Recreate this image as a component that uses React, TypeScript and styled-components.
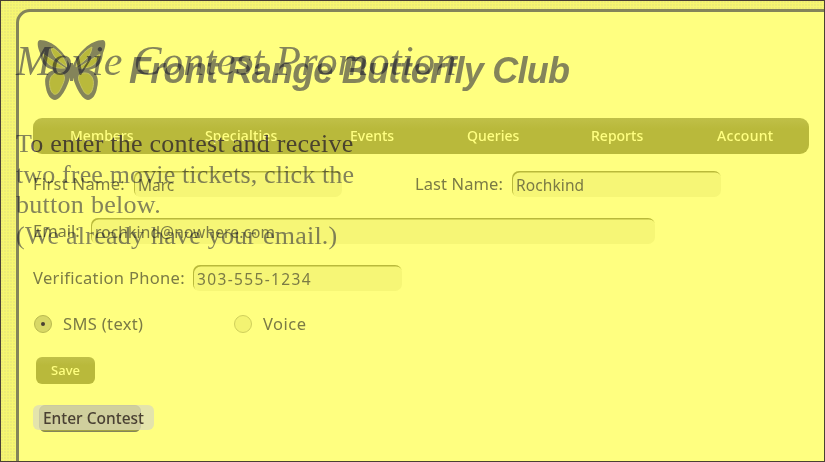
import React from 'react';
import styled, { createGlobalStyle } from 'styled-components';

const ui = '"Noto Sans", "Open Sans", sans-serif';
const serif = '"Liberation Serif", serif';

const GlobalStyle = createGlobalStyle`
  *, *::before, *::after { box-sizing: border-box; }
  body { margin: 0; background: #ffff80; overflow: hidden; }
`;

const Screen = styled.div`
  position: relative;
  width: 825px;
  height: 462px;
  overflow: hidden;
  border: 1px solid #4a4033;
  background-color: #f6f670;
  background-image: radial-gradient(circle at 1px 1px, #e8e678 0.6px, transparent 0.9px);
  background-size: 3px 3px;
  padding: 8px 0 0 15px;
`;

const Panel = styled.main`
  width: 830px;
  height: 480px;
  border: 3px solid #84845a;
  border-radius: 14px;
  background: #ffff80;
  padding: 27px 0 0 14px;
`;

const Banner = styled.header`
  display: flex;
  height: 79px;
  padding-left: 4px;
`;

const ClubName = styled.h1`
  margin: 11px 0 0 23px;
  font: italic bold 36px/42px "Liberation Sans", sans-serif;
  letter-spacing: -0.76px;
  color: #84845a;
  white-space: nowrap;
`;

const Nav = styled.nav`
  display: flex;
  gap: 72px;
  width: 776px;
  height: 36px;
  padding: 8px 0 0 37px;
  border-radius: 9px;
  background: linear-gradient(#c0c048, #b9b93b 30%);
`;

const NavItem = styled.a<{ $w: number; $track?: number }>`
  flex: none;
  width: ${p => p.$w}px;
  font: 500 14px/20px ${ui};
  letter-spacing: ${p => p.$track ?? 0}px;
  color: #ffff80;
  white-space: nowrap;
`;

const Row = styled.div<{ $top: number }>`
  display: flex;
  height: 27px;
  margin-top: ${p => p.$top}px;
`;

const Label = styled.label<{ $w: number; $track?: number }>`
  flex: none;
  width: ${p => p.$w}px;
  font: 16.5px/25px ${ui};
  letter-spacing: ${p => p.$track ?? 0}px;
  color: #7b7b45;
  white-space: nowrap;
`;

const Field = styled.div<{ $w: number; $after?: number; $track?: number }>`
  flex: none;
  width: ${p => p.$w}px;
  height: 26px;
  margin-right: ${p => p.$after ?? 0}px;
  padding-left: 4px;
  border-radius: 7px;
  background: #f6f676;
  box-shadow: inset 1px 1.5px 0 #b9b93b;
  font: 15.5px/28px ${ui};
  letter-spacing: ${p => p.$track ?? 0}px;
  color: #7b7b45;
  white-space: nowrap;
`;

const Radio = styled.span<{ $on?: boolean }>`
  flex: none;
  display: grid;
  place-items: center;
  width: 18px;
  height: 18px;
  margin: 4px 11px 0 1px;
  border: 1px solid ${p => (p.$on ? '#b9b950' : '#cfcf5c')};
  border-radius: 50%;
  background: ${p => (p.$on ? '#d8d866' : '#f3f372')};
  &::after {
    content: '';
    width: 4px;
    height: 4px;
    border-radius: 50%;
    background: ${p => (p.$on ? '#4a4033' : 'transparent')};
  }
`;

const SaveButton = styled.button`
  display: block;
  width: 59px;
  height: 27px;
  margin: 19px 0 0 3px;
  padding: 0;
  border: 0;
  border-radius: 6px;
  background: linear-gradient(#c0c048, #b9b93b 30%);
  font: 500 13px/27px ${ui};
  color: #ffff80;
`;

const CoveredButton = styled.div`
  width: 102px;
  height: 27px;
  margin: 21px 0 0 6px;
  border: 1px solid #84845a;
  border-radius: 6px;
  background: #a3a342;
`;

const Decoy = styled.section`
  position: absolute;
  inset: 0;
  padding: 36px 0 0 15px;
  color: #8484b3;
  mix-blend-mode: multiply;
`;

const DecoyTitle = styled.h2`
  margin: 0;
  font: italic 42px/48px ${serif};
  letter-spacing: 0.36px;
  white-space: nowrap;
`;

const DecoyLine = styled.p<{ $track: number }>`
  margin: 0;
  height: 30.7px;
  font: 26px/31px ${serif};
  letter-spacing: ${p => p.$track}px;
  white-space: nowrap;
`;

const OverNav = styled.span`
  color: #665cc0;
`;

const DecoyText = styled.div`
  margin-top: 43px;
`;

const EnterButton = styled.button`
  position: absolute;
  left: 32px;
  top: 404px;
  width: 121px;
  height: 25px;
  padding: 0;
  border: 0;
  border-radius: 6px;
  background: rgba(222, 220, 184, 0.72);
  box-shadow: inset 0 0 0 12px rgba(222, 220, 184, 0.2);
  font: 500 15.5px/27px ${ui};
  color: #4a4033;
  white-space: nowrap;
`;

const Butterfly = () => (
  <svg width="69" height="62" viewBox="0 0 69 62">
    <g fill="#84845a">
      <path d="M34 30C29 13 15 1 3 1C-1 2 1 9 3 14C4 22 6 26 11 29L17 31C8 33 7 41 9 49C10 56 14 61 18 61C24 61 32 46 34 34Z" />
      <path d="M35 30C40 13 54 1 66 1C70 2 68 9 66 14C65 22 63 26 58 29L52 31C61 33 62 41 60 49C59 56 55 61 51 61C45 61 37 46 35 34Z" />
      <path d="M33 24h3v18h-3z" />
    </g>
    <g fill="#b9b93b" stroke="#c6c660" strokeWidth="1">
      <path d="M14 8C22 12 28 19 30 28C22 22 15 18 14 8ZM6 15C12 19 20 24 28 29C17 30 8 26 6 15Z" />
      <path d="M55 8C47 12 41 19 39 28C47 22 54 18 55 8ZM63 15C57 19 49 24 41 29C52 30 61 26 63 15Z" />
      <path d="M26 35C16 31 11 39 13 48C15 57 20 58 24 49C27 43 29 38 26 35Z" />
      <path d="M43 35C53 31 58 39 56 48C54 57 49 58 45 49C42 43 40 38 43 35Z" />
    </g>
  </svg>
);

export default function App() {
  return (
    <>
      <GlobalStyle />
      <Screen>
        <Panel>
          <Banner>
            <Butterfly />
            <ClubName>Front Range Butterfly Club</ClubName>
          </Banner>
          <Nav>
            <NavItem $w={63}>Members</NavItem>
            <NavItem $w={73} $track={0.15}>Specialties</NavItem>
            <NavItem $w={45}>Events</NavItem>
            <NavItem $w={52}>Queries</NavItem>
            <NavItem $w={54}>Reports</NavItem>
            <NavItem $w={56} $track={0.3}>Account</NavItem>
          </Nav>
          <Row $top={17}>
            <Label $w={101} $track={0.3}>First Name:</Label>
            <Field $w={208} $after={73}>Marc</Field>
            <Label $w={97} $track={0.1}>Last Name:</Label>
            <Field $w={209} $track={0.1}>Rochkind</Field>
          </Row>
          <Row $top={20}>
            <Label $w={58}>Email:</Label>
            <Field $w={564} $track={0.15}>rochkind@nowhere.com</Field>
          </Row>
          <Row $top={20}>
            <Label $w={160} $track={0.32}>Verification Phone:</Label>
            <Field $w={209} $track={1.35}>303-555-1234</Field>
          </Row>
          <Row $top={19}>
            <Radio $on />
            <Label $w={170} $track={0.35}>SMS (text)</Label>
            <Radio />
            <Label $w={60} $track={0.5}>Voice</Label>
          </Row>
          <SaveButton>Save</SaveButton>
          <CoveredButton />
        </Panel>
        <Decoy>
          <DecoyTitle>Movie Contest Promotion</DecoyTitle>
          <DecoyText>
            <DecoyLine $track={0.25}>T<OverNav>o enter the contest and receive</OverNav></DecoyLine>
            <DecoyLine $track={0.14}>two free movie tickets, click the</DecoyLine>
            <DecoyLine $track={0.28}>button below.</DecoyLine>
            <DecoyLine $track={0.23}>(We already have your email.)</DecoyLine>
          </DecoyText>
        </Decoy>
        <EnterButton>Enter Contest</EnterButton>
      </Screen>
    </>
  );
}
